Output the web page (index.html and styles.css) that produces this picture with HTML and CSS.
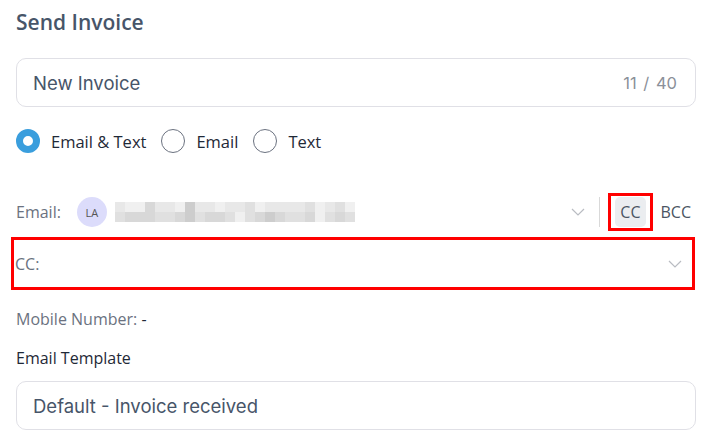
FILE: index.html
```html
<!DOCTYPE html>
<html lang="en">
<head>
  <meta charset="UTF-8" />
  <meta name="viewport" content="width=device-width, initial-scale=1.0" />
  <title>Send Invoice</title>
  <link rel="stylesheet" href="styles.css">
</head>
<body>
  <div class="panel">
    <h2>Send Invoice</h2>

    <div class="field">
      <input type="text" value="New Invoice" maxlength="40" />
      <span class="count">11 / 40</span>
    </div>

    <div class="radios">
      <label class="radio"><span class="dot checked"></span>Email &amp; Text</label>
      <label class="radio"><span class="dot"></span>Email</label>
      <label class="radio"><span class="dot"></span>Text</label>
    </div>

    <div class="email-row">
      <span class="row-label">Email:</span>
      <span class="avatar">LA</span>
      <div class="blurred">
        <span class="a"></span><span class="e"></span><span class="e"></span><span class="c"></span><span class="a"></span><span class="a"></span><span class="e"></span><span class="d"></span><span class="a"></span><span class="a"></span><span class="e"></span><span class="a"></span><span class="a"></span><span class="b"></span><span class="e"></span><span class="a"></span><span class="a"></span><span class="a"></span><span class="a"></span><span class="b"></span><span class="e"></span><span class="a"></span><span class="b"></span><span class="e"></span>
        <span class="b"></span><span class="c"></span><span class="c"></span><span class="c"></span><span class="b"></span><span class="b"></span><span class="c"></span><span class="d"></span><span class="b"></span><span class="c"></span><span class="c"></span><span class="b"></span><span class="e"></span><span class="b"></span><span class="c"></span><span class="d"></span><span class="c"></span><span class="b"></span><span class="b"></span><span class="c"></span><span class="e"></span><span class="b"></span><span class="c"></span><span class="b"></span>
      </div>
      <svg class="chevron" width="14" height="8" viewBox="0 0 14 8"><path d="M1 1l6 6 6-6" fill="none" stroke="#b9bcc2" stroke-width="1.2"/></svg>
      <span class="divider"></span>
      <span class="mark"><button class="pill active">CC</button></span>
      <button class="pill">BCC</button>
    </div>

    <div class="cc-row">
      <span class="row-label">CC:</span>
      <svg class="chevron" width="14" height="8" viewBox="0 0 14 8"><path d="M1 1l6 6 6-6" fill="none" stroke="#b9bcc2" stroke-width="1.2"/></svg>
    </div>

    <div class="mobile"><span class="row-label">Mobile Number:</span> -</div>

    <div class="template-label">Email Template</div>
    <div class="field">
      <input type="text" value="Default - Invoice received" />
    </div>
  </div>
</body>
</html>
```

FILE: styles.css
```css
body {
  margin: 0;
  padding: 0;
  font-family: 'Open Sans', 'Noto Sans', sans-serif;
  background: #fff;
  color: #1f2937;
}
.panel {
  width: 680px;
  padding: 8px 15px 0 16px;
}
h2 {
  margin: 0;
  font-size: 21px;
  line-height: 28px;
  font-weight: 600;
  color: #475569;
}
.field {
  display: flex;
  align-items: center;
  height: 47px;
  border: 1px solid #e0e0e6;
  border-radius: 10px;
  padding: 0 18px 0 16px;
  margin-top: 22px;
}
.field input {
  flex: 1;
  border: none;
  outline: none;
  padding: 0;
  font-family: 'Inter', sans-serif;
  font-size: 18.5px;
  color: #475569;
  background: transparent;
}
.count {
  font-family: 'Inter', sans-serif;
  font-size: 16.5px;
  word-spacing: 2px;
  color: #8b9099;
}
.radios {
  display: flex;
  gap: 15px;
  margin-top: 22px;
  height: 24px;
  align-items: center;
}
.radio {
  display: flex;
  align-items: center;
  gap: 11px;
  font-size: 16.5px;
  color: #1f2937;
}
.dot {
  width: 22px;
  height: 22px;
  border: 1px solid #6b7280;
  border-radius: 50%;
  box-sizing: content-box;
}
.dot.checked {
  width: 10px;
  height: 10px;
  border: 7px solid #3a9edd;
  background: #fff;
}
.email-row {
  display: flex;
  align-items: center;
  height: 38px;
  margin-top: 40px;
}
.row-label {
  color: #6b7280;
  font-size: 16px;
}
.avatar {
  width: 30px;
  height: 30px;
  border-radius: 50%;
  background: #dcdcfb;
  color: #555;
  font-size: 11px;
  display: flex;
  align-items: center;
  justify-content: center;
  margin-left: 16px;
}
.blurred {
  display: grid;
  grid-template-columns: repeat(24, 10px);
  grid-auto-rows: 10px;
  margin-left: 8px;
}
.blurred span { display: block; }
.blurred .a { background: #e8e8e8; }
.blurred .b { background: #e0e0e0; }
.blurred .c { background: #d8d8d8; }
.blurred .d { background: #cdcdcd; }
.blurred .e { background: #f0f0f0; }
.email-row .chevron {
  margin-left: auto;
}
.divider {
  width: 1px;
  height: 30px;
  background: #d9d9d9;
  margin: 0 8px 0 14px;
}
.mark {
  border: 3px solid #ff0000;
  padding: 1px 4px;
  display: flex;
}
.pill {
  border: none;
  background: transparent;
  font-family: 'Open Sans', sans-serif;
  font-size: 16px;
  color: #4b5563;
  height: 30px;
  padding: 0 5px;
  border-radius: 5px;
  cursor: pointer;
}
.pill.active {
  background: #ebedf0;
}
.mark + .pill {
  margin-left: 3px;
}
.cc-row {
  display: flex;
  align-items: center;
  justify-content: space-between;
  height: 47px;
  margin: 6px 1px 0 -5px;
  border: 3px solid #ff0000;
  padding: 0 10px 0 1px;
}
.mobile {
  margin-top: 19px;
  line-height: 20px;
  font-size: 16px;
}
.template-label {
  margin-top: 19px;
  line-height: 20px;
  font-size: 16px;
  color: #1f2937;
}
.template-label + .field {
  margin-top: 13px;
}
```
